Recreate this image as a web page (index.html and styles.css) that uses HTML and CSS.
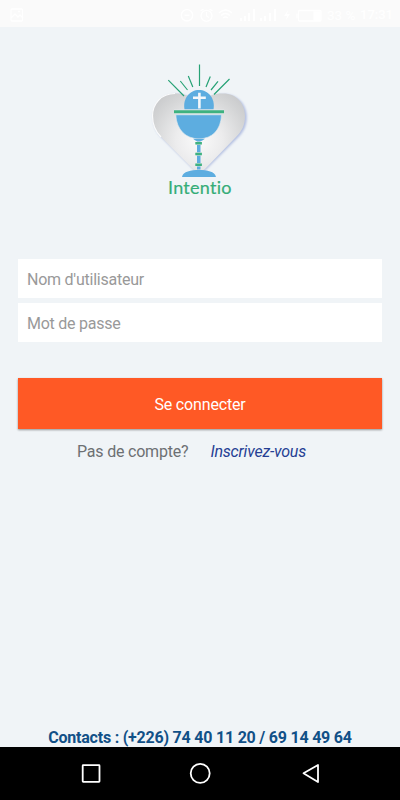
FILE: index.html
```html
<!DOCTYPE html>
<html lang="fr">
<head>
<meta charset="utf-8">
<title>Intentio</title>
<link rel="stylesheet" href="styles.css">
</head>
<body>
<div class="screen">
  <header class="status">
    <svg class="notification" width="14" height="14" viewBox="0 0 14 14"><rect x="1" y="1" width="11.5" height="12" rx="1"/><path d="M1 10l4-4 3 3 2-2 3 3M8 3.5h2"/></svg>
    <div class="indicators">
      <svg width="142" height="16" viewBox="180 6 142 16">
        <circle cx="187" cy="14.3" r="5.7"/><path d="M184.500 14.300h5"/>
        <circle cx="206.500" cy="14.800" r="5.500"/><path d="M206.500 11v4l2.500 1.500M200.500 10l3-2M212.500 10l-3-2"/>
        <path d="M219 12q6.500-6 13 0M221 14.500q4.500-4 9 0M223 17q2.500-2 5 0"/>
        <path d="M241 20v-3M245 20v-5M249 20v-8M254 20V8M261 20v-3M265 20v-5M270 20v-8M275 20V8" stroke-width="1.700"/>
        <path d="M288 9l-4 6h3l-1 4 4-6h-3z" fill="#fff" stroke="none"/>
        <rect x="298.500" y="9.500" width="22.500" height="10.500" rx="1"/><path d="M297 12.500v5"/><path d="M314 11h6v8h-6z" fill="#fff"/>
      </svg>
      <span class="battery">33 %</span><span class="clock">17:31</span>
    </div>
  </header>
  <main class="content">
    <svg class="logo" width="120" height="150" viewBox="140 55 120 150" role="img" aria-label="Intentio">
      <defs>
        <radialGradient id="silver" gradientUnits="userSpaceOnUse" cx="199" cy="140" r="58">
          <stop offset="0" stop-color="#fafafa"/><stop offset=".4" stop-color="#ececed"/><stop offset=".8" stop-color="#d4d5d6"/><stop offset="1" stop-color="#c9cacc"/>
        </radialGradient>
        <filter id="soft" x="-20%" y="-20%" width="140%" height="140%"><feGaussianBlur stdDeviation="1.100"/></filter>
      </defs>
      <path transform="translate(.8 .8)" class="heart-shadow" d="M199 104C192 96 184 93.500 175 93.500C161 93.500 152.500 104 152.500 116C152.500 125 155 131 161 137L193 169Q199 174 205 169L237 137C243 131 246 125 246 116C246 104 237 93.500 223 93.500C214 93.500 206 96 199 104Z"/>
      <path class="heart" d="M199 104C192 96 184 93.500 175 93.500C161 93.500 152.500 104 152.500 116C152.500 125 155 131 161 137L193 169Q199 174 205 169L236 137C242 131 245 125 245 116C245 104 237 93.500 223 93.500C214 93.500 206 96 199 104Z"/>
      <path class="heart-rim" d="M161 137C155 131 152.500 125 152.500 116C152.500 104 161 93.500 175 93.500"/>
      <path class="rays" d="M199.500 64.500v21.500M168.300 80.200L184 96M180.300 81L187.500 90M188.300 76l4.500 11M210.300 76.500L206 87M218 81.300L211 90M229.500 79L214 94.500"/>
      <path class="blue" d="M184.500 109.500C182.500 98 190 90 199 90S215.500 98 213.500 109.500Z"/>
      <path class="cross" d="M199.400 92.800V108.500M193 97.800h12.800"/>
      <path class="halo" d="M174 109.500h50v4.500h-50z"/>
      <path class="green" d="M174 110.300h50v2.900h-50z"/>
      <path class="blue cup" d="M175.800 114.800h45.700C221 130 212 138.800 199 138.800S176.500 130 175.800 114.800Z"/>
      <path class="blue" d="M193 138.800h12q-3 2-4.500 2.500V169.500h-3.500v-28.200q-2-1-4-2.500zM182 177C183 171.500 191 170 199 170S215 171.500 216 177Z"/>
      <path class="halo" d="M196 141.500h5.500v3.500h-5.500zM196 152.300h5.500v3.500h-5.500zM196 163h5.500v3.500h-5.500z"/>
      <path class="green" d="M195.300 142h6.600v2.500h-6.600zM195.300 152.800h6.600v2.500h-6.600zM195.300 163.500h6.600v2.500h-6.600z"/>
      <text class="wordmark" x="168" y="193.500" textLength="63.500">Intentio</text>
    </svg>
    <form class="login">
      <input class="field" type="text" placeholder="Nom d'utilisateur">
      <input class="field" type="password" placeholder="Mot de passe">
      <button class="submit" type="button">Se connecter</button>
    </form>
    <p class="signup"><span>Pas de compte?</span><a class="signup-link">Inscrivez-vous</a></p>
    <p class="contacts">Contacts : (+226) 74 40 11 20 / 69 14 49 64</p>
  </main>
  <nav class="navigation">
    <svg width="24" height="24" viewBox="79 761 24 24"><rect x="82.700" y="765.200" width="16.800" height="16.600" rx=".5"/></svg>
    <svg width="24" height="24" viewBox="189 761 24 24"><circle cx="200.200" cy="773.300" r="9.500"/></svg>
    <svg width="24" height="24" viewBox="299 761 24 24"><path d="M303.500 773.300L318 765v17z"/></svg>
  </nav>
</div>
</body>
</html>
```

FILE: styles.css
```css
* { box-sizing: border-box; }
body { margin: 0; font-family: Roboto, "Liberation Sans", sans-serif; }
.screen { width: 400px; height: 800px; display: flex; flex-direction: column; background: #f0f4f7; }
.status { height: 27px; flex: none; display: flex; align-items: center; justify-content: space-between; padding: 2px 0 0 10px; background: #fafafa; color: #fff; }
.status svg { fill: none; stroke: #fff; stroke-width: 1.3; display: block; flex: none; }
.indicators { display: flex; align-items: center; width: 220px; font-size: 13.5px; white-space: nowrap; }
.battery { width: 33px; margin-left: 5px; }
.clock { font-weight: 500; font-size: 13px; }
.content { flex: 1; display: flex; flex-direction: column; align-items: center; padding: 28px 18px 0; }
.logo { flex: none; }
.heart { fill: url(#silver); }
.heart-rim { fill: none; stroke: #fafbfc; stroke-width: 1.2; }
.heart-shadow { fill: #b3bfe2; filter: url(#soft); }
.rays { fill: none; stroke: #27a276; stroke-width: 1.2; }
.blue { fill: #5dade0; }
.green { fill: #3eb280; }
.halo { fill: #e4e8e9; }
.cup { stroke: #e8ecee; stroke-width: .6; }
.cross { stroke: #f4f7fa; stroke-width: 2.6; fill: none; }
.wordmark { font: 18px Lato, sans-serif; font-variant-ligatures: none; fill: #35ad77; stroke: #35ad77; stroke-width: .2; }
.login { width: 100%; margin-top: 54px; display: flex; flex-direction: column; }
.field { height: 39px; margin: 0 0 5px; padding: 2px 9px 0; border: 0; border-radius: 0; background: #fff; font: 16px Roboto, sans-serif; letter-spacing: -.24px; }
.field::placeholder { color: #999; opacity: 1; }
.submit { height: 51px; margin-top: 31px; padding: 2px 0 0; border: 0; background: #ff5925; color: #fff; font: 16px Roboto, sans-serif; letter-spacing: -.16px; box-shadow: 0 1px 2px rgba(0,0,0,.4); }
.signup { width: 100%; margin: 13px 0 0; padding-left: 59px; display: flex; gap: 22px; font-size: 16px; letter-spacing: -.2px; line-height: 19px; color: #6d7073; }
.signup-link { color: #263f94; font-style: italic; }
.contacts { margin: auto 0 0; font-size: 16px; letter-spacing: -.22px; font-weight: 700; line-height: 19px; color: #115087; white-space: nowrap; }
.navigation { height: 53px; flex: none; display: flex; gap: 86px; align-items: center; padding: 0 0 1px 79px; background: #000; }
.navigation svg { fill: none; stroke: #fff; stroke-width: 1.8; stroke-linejoin: round; }
```
